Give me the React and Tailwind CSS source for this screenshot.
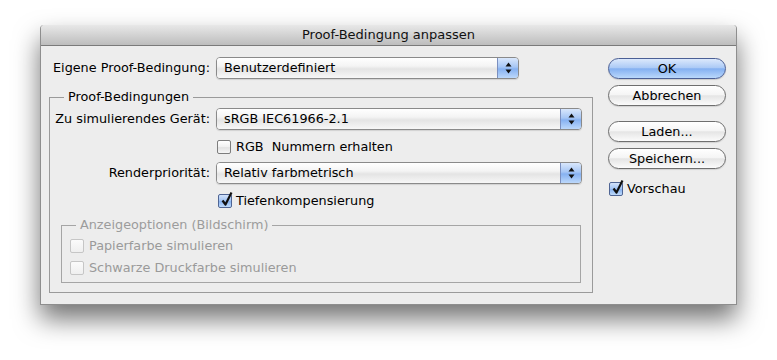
import React from "react";

const FONT = { fontFamily: '"DejaVu Sans", "Liberation Sans", sans-serif' };

function Arrows() {
  return (
    <svg width="7" height="12" viewBox="0 0 7 12">
      <polygon points="3.5,0.5 6.5,4.5 0.5,4.5" fill="#111" />
      <polygon points="0.5,7.5 6.5,7.5 3.5,11.5" fill="#111" />
    </svg>
  );
}

function Popup({ text, w }) {
  return (
    <div
      className={`flex h-[22px] ${w} overflow-hidden rounded-[4px] border border-[#8a8a8a] shadow-[0_1px_1px_rgba(0,0,0,0.12)]`}
    >
      <div className="flex flex-1 items-center pl-[7px] bg-[linear-gradient(#ffffff,#f4f4f4_40%,#e4e4e4_55%,#f7f7f7)]">
        {text}
      </div>
      <div className="flex w-[21px] items-center justify-center border-l border-[#7b8fbf] bg-[linear-gradient(#d9e7fc,#a6c6f5_45%,#86b1f1_55%,#bcd8fb)]">
        <Arrows />
      </div>
    </div>
  );
}

function Check({ checked, disabled }) {
  if (checked) {
    return (
      <div className="relative h-[14px] w-[14px] shrink-0 rounded-[2px] border border-[#4f6594] bg-[linear-gradient(#d3e3fb,#9fc2f3_50%,#88b3f0_55%,#c0dbfb)]">
        <svg
          className="absolute left-[1px] top-[-4px]"
          width="14"
          height="16"
          viewBox="0 0 14 16"
        >
          <path
            d="M2.5 9.5 L5.5 13.5 L11.5 1.5"
            fill="none"
            stroke="#111"
            strokeWidth="2.2"
            strokeLinejoin="round"
          />
        </svg>
      </div>
    );
  }
  if (disabled) {
    return (
      <div className="h-[14px] w-[14px] shrink-0 rounded-[2px] border border-[#c6c6c6] bg-[linear-gradient(#fbfbfb,#efefef)]" />
    );
  }
  return (
    <div className="h-[14px] w-[14px] shrink-0 rounded-[2px] border border-[#7d7d7d] bg-[linear-gradient(#ffffff,#f0f0f0_50%,#e2e2e2_55%,#f6f6f6)]" />
  );
}

function Button({ children, primary }) {
  return primary ? (
    <div className="flex h-[21px] w-[118px] items-center justify-center rounded-full border border-[#4b5f95] bg-[linear-gradient(#dce9fc,#adcbf6_45%,#84b0f1_52%,#bad8fb)] shadow-[0_1px_1px_rgba(0,0,0,0.15)]">
      {children}
    </div>
  ) : (
    <div className="flex h-[21px] w-[118px] items-center justify-center rounded-full border border-[#6e6e6e] bg-[linear-gradient(#ffffff,#f5f5f5_45%,#e5e5e5_52%,#fbfbfb)] shadow-[0_1px_1px_rgba(0,0,0,0.12)]">
      {children}
    </div>
  );
}

export default function App() {
  return (
    <div
      className="h-[360px] w-[777px] overflow-hidden bg-white pl-[40px] pt-[25px] text-[12.8px] text-black"
      style={FONT}
    >
      <div className="flex h-[280px] w-[697px] flex-col rounded-t-[4px] border-x border-b border-[#8e8e8e] bg-[#ededed] shadow-[0_14px_26px_rgba(0,0,0,0.55)]">
        <div className="flex h-[21px] shrink-0 items-center justify-center rounded-t-[4px] border-b border-[#7a7a7a] bg-[linear-gradient(#e8e8e8,#bdbdbd)] text-[13px] text-[#111]">
          Proof-Bedingung anpassen
        </div>
        <div className="flex pl-[8px]">
          <div className="flex w-[544px] flex-col">
            <div className="mt-[11px] flex h-[22px] items-center">
              <div className="w-[161px] whitespace-nowrap text-right">Eigene Proof-Bedingung:</div>
              <div className="ml-[6px]">
                <Popup text="Benutzerdefiniert" w="w-[303px]" />
              </div>
            </div>

            <fieldset className="mt-[10px] min-w-0 border border-[#9a9a9a] pb-[9px]">
              <legend className="ml-[14px] h-[16px] px-[4px] leading-[16px]">
                Proof-Bedingungen
              </legend>

              <div className="mt-[3px] flex h-[22px] items-center">
                <div className="w-[160px] whitespace-nowrap text-right">Zu simulierendes Gerät:</div>
                <div className="ml-[6px]">
                  <Popup text="sRGB IEC61966-2.1" w="w-[366px]" />
                </div>
              </div>

              <div className="mt-[7px] flex h-[20px] items-center pl-[167px]">
                <Check />
                <span className="ml-[5px] whitespace-pre">RGB  Nummern erhalten</span>
              </div>

              <div className="mt-[5px] flex h-[22px] items-center">
                <div className="w-[160px] whitespace-nowrap text-right">Renderpriorität:</div>
                <div className="ml-[6px]">
                  <Popup text="Relativ farbmetrisch" w="w-[366px]" />
                </div>
              </div>

              <div className="mt-[7px] flex h-[20px] items-center pl-[168px]">
                <Check checked />
                <span className="ml-[4px]">Tiefenkompensierung</span>
              </div>

              <fieldset className="mx-[11px] mt-[6px] min-w-0 border border-[#a5a5a5] pb-[4px]">
                <legend className="ml-[14px] h-[16px] px-[4px] leading-[16px] text-[#9c9c9c]">
                  Anzeigeoptionen (Bildschirm)
                </legend>
                <div className="mt-[3px] flex h-[20px] items-center pl-[8px] text-[#9a9a9a]">
                  <Check disabled />
                  <span className="ml-[5px]">Papierfarbe simulieren</span>
                </div>
                <div className="mt-[2px] flex h-[20px] items-center pl-[8px] text-[#9a9a9a]">
                  <Check disabled />
                  <span className="ml-[5px]">Schwarze Druckfarbe simulieren</span>
                </div>
              </fieldset>
            </fieldset>
          </div>

          <div className="ml-[15px] flex w-[118px] flex-col">
            <div className="mt-[12px]">
              <Button primary>OK</Button>
            </div>
            <div className="mt-[6px]">
              <Button>Abbrechen</Button>
            </div>
            <div className="mt-[15px]">
              <Button>Laden...</Button>
            </div>
            <div className="mt-[6px]">
              <Button>Speichern...</Button>
            </div>
            <div className="mt-[10px] flex h-[20px] items-center pl-[1px]">
              <Check checked />
              <span className="ml-[4px]">Vorschau</span>
            </div>
          </div>
        </div>
      </div>
    </div>
  );
}
